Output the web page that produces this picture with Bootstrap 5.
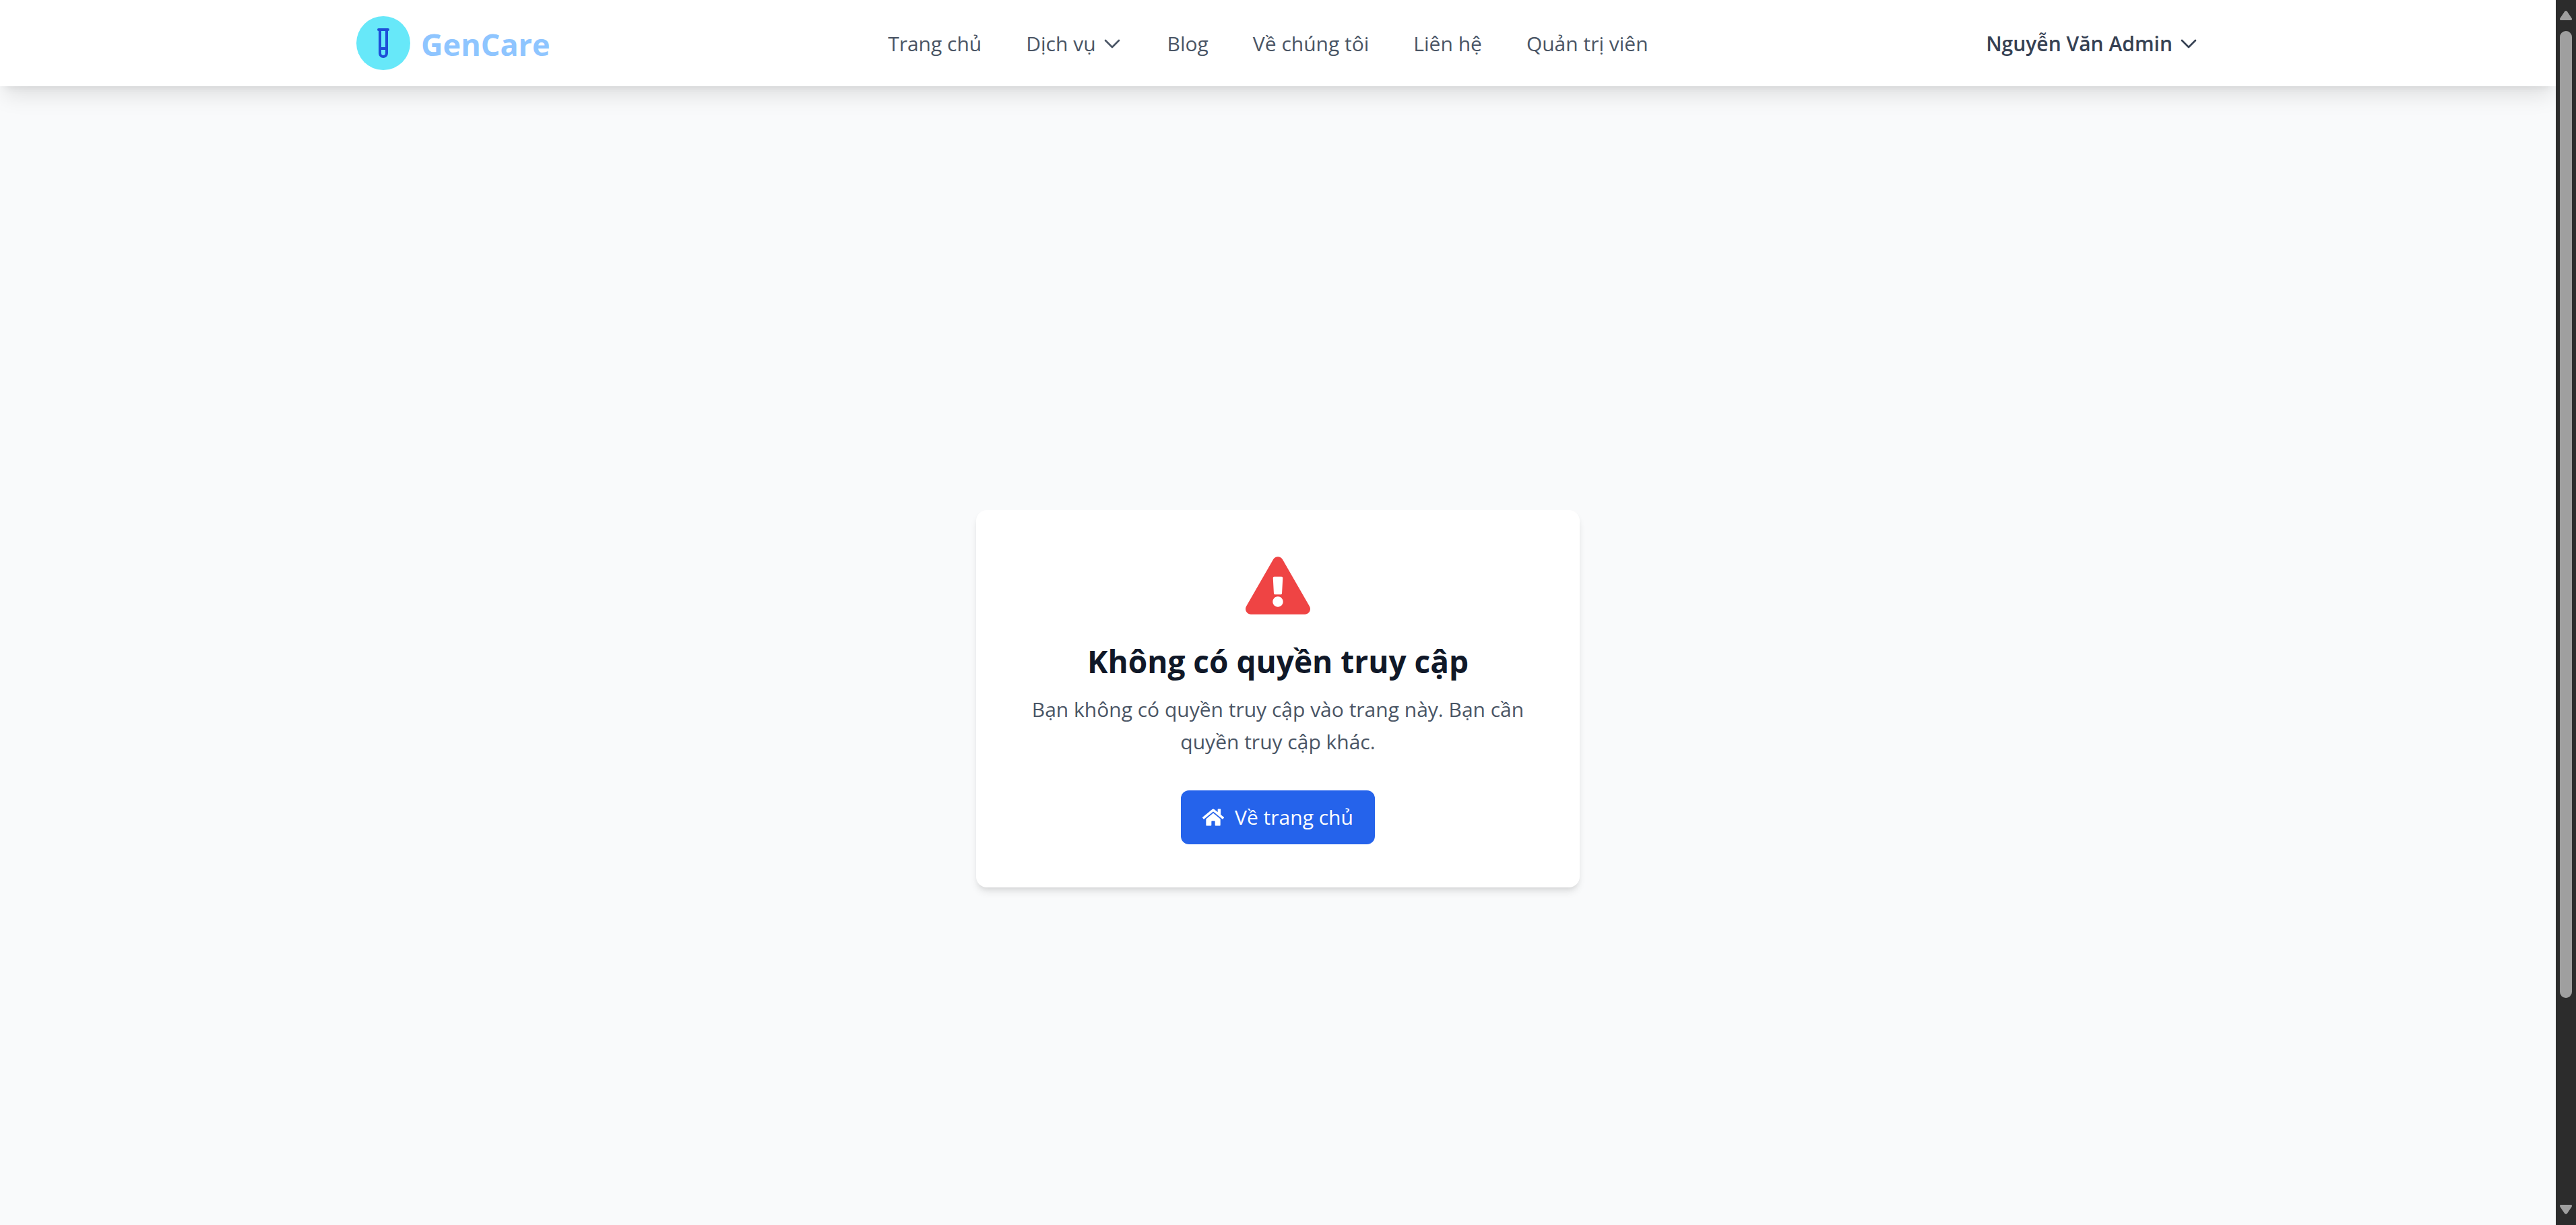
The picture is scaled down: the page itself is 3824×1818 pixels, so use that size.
<!DOCTYPE html>
<html lang="vi">
<head>
<meta charset="utf-8">
<meta name="viewport" content="width=device-width, initial-scale=1">
<title>GenCare</title>
<link href="https://cdn.jsdelivr.net/npm/bootstrap@5.3.0/dist/css/bootstrap.min.css" rel="stylesheet">
<style>
  body { font-family: "Open Sans", "Noto Sans", sans-serif; font-size: 30px; line-height: 48px; color: #4a5565; background: #f9fafb; }
  .site-header { padding: 24px 0; box-shadow: 0 20px 30px -6px rgba(0,0,0,.1), 0 8px 12px -8px rgba(0,0,0,.1); }
  .site-wrap { max-width: 2800px; padding: 0 32px; }
  .brand-name { font-size: 45px; line-height: 64px; color: #8ec5ff; padding-top: 4px; }
  .main-links { gap: 66px; padding-top: 2px; }
  .main-links a, .main-links button { color: #4a5565; line-height: 48px; }
  .user-menu { color: #364153; line-height: 48px; padding: 2px 0 0; }
  .access-area { min-height: 100vh; }
  .access-card { width: 100%; max-width: 896px; padding: 64px; border-radius: 16px; box-shadow: 0 8px 12px -2px rgba(0,0,0,.1), 0 4px 8px -4px rgba(0,0,0,.1); }
  .access-title { font-size: 46px; line-height: 64px; color: #101828; margin: 32px 0 16px; }
  .access-text { margin-bottom: 48px; }
  .home-btn { padding: 16px 32px; gap: 16px; border-radius: 12px; background: #2563eb; color: #fff; font-size: 30px; line-height: 48px; }
  .home-btn:hover { background: #1d4ed8; color: #fff; }
  .scroll-track { width: 30px; padding: 16px 6px; background: #2c2c2c; gap: 16px; }
  .scroll-thumb { height: calc(80% + 6px); border-radius: 9px; background: #9f9f9f; }
</style>
</head>
<body>
<div class="d-flex vh-100 overflow-hidden">
  <div class="flex-grow-1 overflow-hidden">
    <header class="site-header bg-white position-relative">
      <div class="site-wrap mx-auto d-flex align-items-center justify-content-between">
        <a href="#" class="d-flex align-items-center gap-3 text-decoration-none">
          <svg width="80" height="80" viewBox="0 0 80 80" aria-hidden="true">
            <circle cx="40" cy="40" r="40" fill="#67e8f9"/>
            <path d="M33 20h14M35 20v35a5 5 0 0 0 10 0V20M35 48h10" fill="none" stroke="#1d4ed8" stroke-width="4" stroke-linecap="round"/>
          </svg>
          <span class="brand-name fw-bold">GenCare</span>
        </a>
        <nav class="main-links d-flex align-items-center">
          <a href="#" class="text-decoration-none">Trang chủ</a>
          <button type="button" class="border-0 bg-transparent p-0 d-flex align-items-center gap-2">Dịch vụ
            <svg width="32" height="32" viewBox="0 0 24 24" fill="none" stroke="currentColor" stroke-width="2" stroke-linecap="round" stroke-linejoin="round" aria-hidden="true"><path d="m19.5 8.25-7.5 7.5-7.5-7.5"/></svg>
          </button>
          <a href="#" class="text-decoration-none">Blog</a>
          <a href="#" class="text-decoration-none">Về chúng tôi</a>
          <a href="#" class="text-decoration-none">Liên hệ</a>
          <a href="#" class="text-decoration-none">Quản trị viên</a>
        </nav>
        <button type="button" class="user-menu fw-semibold border-0 bg-transparent d-flex align-items-center gap-2">Nguyễn Văn Admin
          <svg width="32" height="32" viewBox="0 0 24 24" fill="none" stroke="currentColor" stroke-width="2" stroke-linecap="round" stroke-linejoin="round" aria-hidden="true"><path d="m19.5 8.25-7.5 7.5-7.5-7.5"/></svg>
        </button>
      </div>
    </header>
    <main class="access-area d-flex align-items-center justify-content-center">
      <section class="access-card bg-white text-center d-flex flex-column align-items-center">
        <svg width="96" height="96" viewBox="0 0 576 512" fill="#ef4444" aria-hidden="true"><path d="M569.517 440.013C587.975 472.007 564.806 512 527.94 512H48.054c-36.937 0-59.999-40.055-41.577-71.987L246.423 23.985c18.467-32.009 64.72-31.951 83.154 0l239.94 416.028zM288 354c-25.405 0-46 20.595-46 46s20.595 46 46 46 46-20.595 46-46-20.595-46-46-46zm-43.673-165.346l7.418 136c.347 6.364 5.609 11.346 11.982 11.346h48.546c6.373 0 11.635-4.982 11.982-11.346l7.418-136c.375-6.874-5.098-12.654-11.982-12.654h-63.383c-6.884 0-12.356 5.78-11.981 12.654z"/></svg>
        <h1 class="access-title fw-bold">Không có quyền truy cập</h1>
        <p class="access-text">Bạn không có quyền truy cập vào trang này. Bạn cần quyền truy cập khác.</p>
        <button type="button" class="home-btn btn border-0 d-inline-flex align-items-center">
          <svg width="32" height="32" viewBox="0 0 576 512" fill="currentColor" aria-hidden="true"><path d="M280.37 148.26L96 300.11V464a16 16 0 0 0 16 16l112.06-.29a16 16 0 0 0 15.92-16V368a16 16 0 0 1 16-16h64a16 16 0 0 1 16 16v95.64a16 16 0 0 0 16 16.05L464 480a16 16 0 0 0 16-16V300L295.67 148.26a12.19 12.19 0 0 0-15.3 0zM571.6 251.47L488 182.56V44.05a12 12 0 0 0-12-12h-56a12 12 0 0 0-12 12v72.61L318.47 43a48 48 0 0 0-61 0L4.34 251.47a12 12 0 0 0-1.6 16.9l25.5 31A12 12 0 0 0 45.15 301l235.22-193.74a12.19 12.19 0 0 1 15.3 0L530.9 301a12 12 0 0 0 16.9-1.6l25.5-31a12 12 0 0 0-1.7-16.93z"/></svg>
          Về trang chủ
        </button>
      </section>
    </main>
  </div>
  <div class="scroll-track d-flex flex-column flex-shrink-0" aria-hidden="true">
    <svg class="flex-shrink-0" width="18" height="14" viewBox="0 0 18 14" fill="#9f9f9f"><path d="M7 1.2Q9-1 11 1.2L17.6 11Q19 14 16 14H2Q-1 14 .4 11Z"/></svg>
    <div class="scroll-thumb"></div>
    <svg class="flex-shrink-0 mt-auto" width="18" height="14" viewBox="0 0 18 14" fill="#9f9f9f"><path d="M7 12.8Q9 15 11 12.8L17.6 3Q19 0 16 0H2Q-1 0 .4 3Z"/></svg>
  </div>
</div>
<script src="https://cdn.jsdelivr.net/npm/bootstrap@5.3.0/dist/js/bootstrap.bundle.min.js"></script>
</body>
</html>
